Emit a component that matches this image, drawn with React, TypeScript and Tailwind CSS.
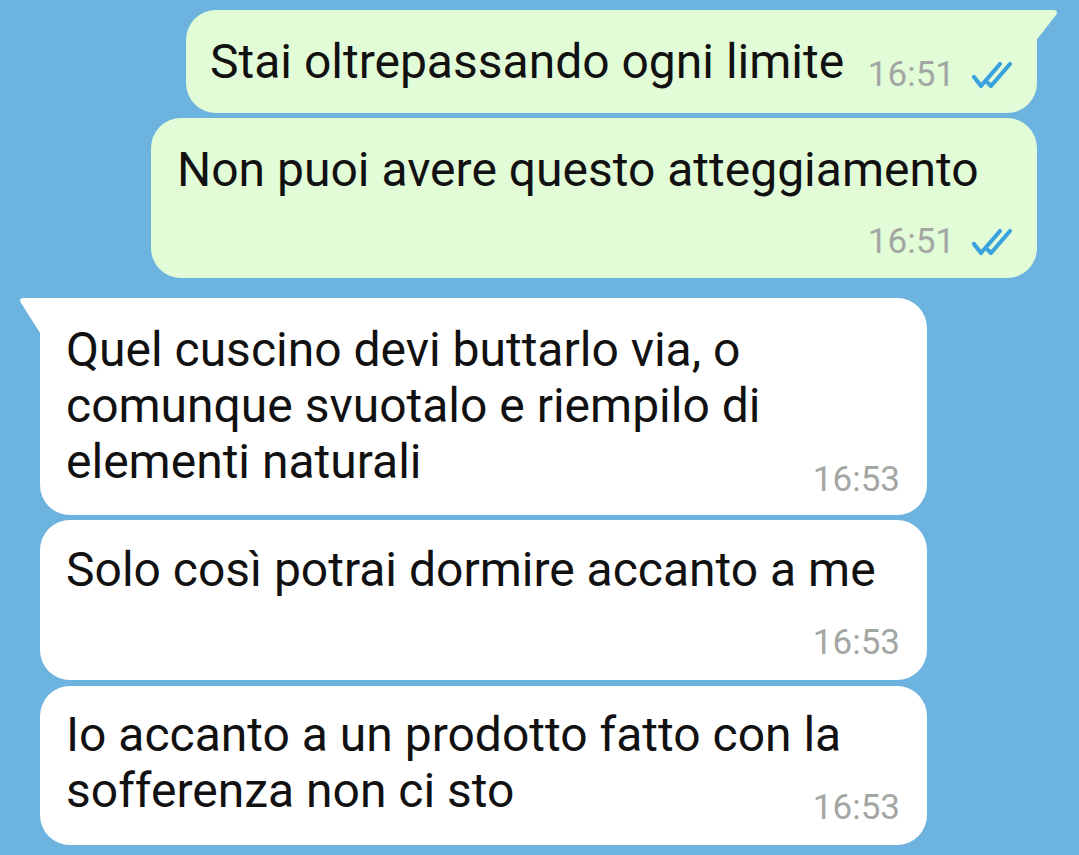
import React from "react";

const DoubleCheck = () => (
  <svg width="44" height="28" viewBox="0 0 44 28" fill="none" className="shrink-0">
    <path d="M3 16 L10 25 L29 3" stroke="#3aa3dd" strokeWidth="4.2" strokeLinecap="round" strokeLinejoin="round" />
    <path d="M17 22 L20 25 L39 3" stroke="#3aa3dd" strokeWidth="4.2" strokeLinecap="round" strokeLinejoin="round" />
  </svg>
);

const OutTail = () => (
  <svg className="absolute -right-[22px] top-0" width="24" height="34" viewBox="0 0 24 34">
    <path d="M0 0 L18 0 Q24 0 21 5 L0 32 Z" fill="#e2fcd7" />
  </svg>
);

const InTail = () => (
  <svg className="absolute -left-[22px] top-0" width="24" height="40" viewBox="0 0 24 40">
    <path d="M24 0 L6 0 Q0 0 3 5 L24 38 Z" fill="#ffffff" />
  </svg>
);

const Time = ({ t, check, className = "" }: { t: string; check?: boolean; className?: string }) => (
  <div className={`flex items-center justify-end gap-[16px] text-[35px] leading-[40px] text-[#a3a7a3] shrink-0 ${className}`}>
    <span>{t}</span>
    {check && <DoubleCheck />}
  </div>
);

const msg = "text-[48px] leading-[56px] text-[#111]";

export default function App() {
  return (
    <div
      className="w-[1079px] h-[855px] overflow-hidden bg-[#6db3e0] flex flex-col pt-[10px]"
      style={{ fontFamily: "Roboto, 'Liberation Sans', sans-serif" }}
    >
      {/* outgoing */}
      <div className="self-end mr-[42px] w-[851px] relative bg-[#e2fcd7] rounded-[30px] rounded-tr-none pl-[24px] pr-[22px] pt-[24px] pb-[18px] flex items-start justify-between">
        <OutTail />
        <div className={msg}>Stai oltrepassando ogni limite</div>
        <Time t="16:51" check className="mt-[21px]" />
      </div>
      <div className="self-end mr-[42px] mt-[5px] w-[886px] bg-[#e2fcd7] rounded-[30px] pl-[26px] pr-[22px] pt-[24px] pb-[16px]">
        <div className={msg}>Non puoi avere questo atteggiamento</div>
        <Time t="16:51" check className="mt-[24px]" />
      </div>

      {/* incoming */}
      <div className="ml-[40px] mt-[20px] w-[887px] relative bg-white rounded-[30px] rounded-tl-none pl-[26px] pr-[27px] pt-[24px] pb-[15px]">
        <InTail />
        <div className={msg}>Quel cuscino devi buttarlo via, o</div>
        <div className={msg}>comunque svuotalo e riempilo di</div>
        <div className="flex items-start justify-between">
          <div className={msg}>elementi naturali</div>
          <Time t="16:53" className="mt-[26px]" />
        </div>
      </div>
      <div className="ml-[40px] mt-[5px] w-[887px] bg-white rounded-[30px] pl-[26px] pr-[27px] pt-[22px] pb-[17px]">
        <div className={msg}>Solo così potrai dormire accanto a me</div>
        <Time t="16:53" className="mt-[25px]" />
      </div>
      <div className="ml-[40px] mt-[6px] w-[887px] bg-white rounded-[30px] pl-[26px] pr-[27px] pt-[21px] pb-[17px]">
        <div className={msg}>Io accanto a un prodotto fatto con la</div>
        <div className="flex items-start justify-between">
          <div className={msg}>sofferenza non ci sto</div>
          <Time t="16:53" className="mt-[25px]" />
        </div>
      </div>
    </div>
  );
}
